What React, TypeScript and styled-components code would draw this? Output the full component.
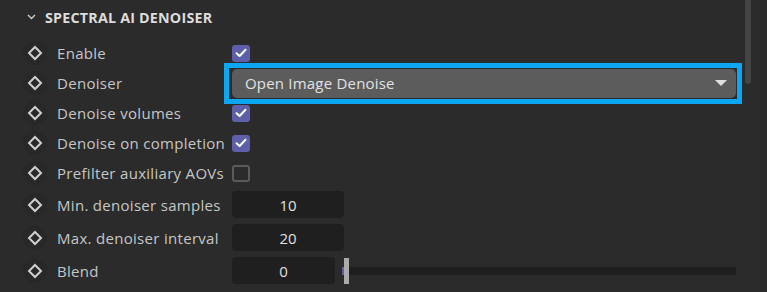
import styled, { createGlobalStyle } from "styled-components";

const GlobalStyle = createGlobalStyle`
  html, body {
    margin: 0;
    padding: 0;
    background: #2b2b2b;
    font-family: "Open Sans", "Noto Sans", sans-serif;
    overflow: hidden;
  }
`;

const Panel = styled.div`
  position: relative;
  width: 767px;
  height: 292px;
  background: #2b2b2b;
  color: #c9c9c9;
`;

const Scrollbar = styled.div`
  position: absolute;
  top: 0;
  left: 745px;
  width: 6px;
  height: 84px;
  background: #444;
  border-radius: 0 0 3px 3px;
`;

const Header = styled.div`
  display: flex;
  align-items: center;
  height: 34px;
  padding-left: 27px;
  gap: 9px;
`;

const Title = styled.h2`
  margin: 0;
  font-size: 14.3px;
  font-weight: 700;
  color: #dcdcdc;
  letter-spacing: 0.2px;
`;

const Rows = styled.div`
  display: flex;
  flex-direction: column;
  padding-top: 4px;
`;

const Row = styled.div<{ $tall?: boolean }>`
  display: grid;
  grid-template-columns: 24px 165px 1fr;
  column-gap: 10px;
  align-items: center;
  height: ${(p) => (p.$tall ? 33 : 30)}px;
  padding-left: 23px;
  padding-right: 31px;
`;

const KeyButton = styled.span`
  display: flex;
  align-items: center;
  justify-content: center;
  width: 24px;
  height: 24px;
  border-radius: 50%;
  background: #282828;
`;

const Label = styled.span`
  font-size: 15px;
  color: #c6c6c6;
  white-space: nowrap;
  letter-spacing: 0.3px;
`;

const Check = styled.span<{ $on?: boolean }>`
  display: flex;
  align-items: center;
  justify-content: center;
  box-sizing: border-box;
  width: 18px;
  height: 17px;
  border-radius: 3px;
  background: ${(p) => (p.$on ? "#5d5fa8" : "transparent")};
  border: ${(p) => (p.$on ? "none" : "2px solid #5b5b5b")};
`;

const DropWrap = styled.div`
  position: relative;
`;

const Dropdown = styled.div`
  display: flex;
  align-items: center;
  justify-content: space-between;
  height: 29px;
  padding: 0 9px 0 13px;
  background: #5c5c5c;
  border-radius: 5px;
  font-size: 15px;
  color: #e2e2e2;
  letter-spacing: 0.2px;
`;

const Highlight = styled.span`
  position: absolute;
  top: -6px;
  bottom: -6px;
  left: -8px;
  right: -6px;
  border: 5px solid #0ca6f2;
  pointer-events: none;
`;

const NumField = styled.div<{ $w: number }>`
  display: flex;
  align-items: center;
  justify-content: center;
  width: ${(p) => p.$w}px;
  height: 27px;
  background: #1f1f1f;
  border-radius: 4px;
  font-size: 15px;
  color: #e0e0e0;
`;

const SliderLine = styled.div`
  display: flex;
  align-items: center;
`;

const Track = styled.div`
  position: relative;
  flex: 1;
  height: 8px;
  margin-left: 14px;
  background: #1e1e1e;
`;

const Thumb = styled.span`
  position: absolute;
  left: -5px;
  top: -9px;
  width: 5px;
  height: 26px;
  background: #ababab;
  &::before {
    content: "";
    position: absolute;
    left: -2px;
    top: 9px;
    width: 2px;
    height: 8px;
    background: #5d5fa8;
  }
`;

function Diamond() {
  return (
    <KeyButton>
      <svg width="16" height="16" viewBox="0 0 16 16">
        <path d="M8 2 L14 8 L8 14 L2 8 Z" fill="none" stroke="#cfcfcf" strokeWidth="2" />
      </svg>
    </KeyButton>
  );
}

function CheckBox({ on }: { on?: boolean }) {
  return (
    <Check $on={on}>
      {on && (
        <svg width="12" height="10" viewBox="0 0 12 10">
          <path d="M1.5 5.2 L4.6 8 L10.5 1.8" fill="none" stroke="#fff" strokeWidth="2" strokeLinecap="round" strokeLinejoin="round" />
        </svg>
      )}
    </Check>
  );
}

export default function App() {
  return (
    <Panel>
      <GlobalStyle />
      <Scrollbar />
      <Header>
        <svg width="9" height="6" viewBox="0 0 9 6">
          <path d="M1 1 L4.5 4.5 L8 1" fill="none" stroke="#cfcfcf" strokeWidth="1.4" />
        </svg>
        <Title>SPECTRAL AI DENOISER</Title>
      </Header>
      <Rows>
        <Row>
          <Diamond />
          <Label>Enable</Label>
          <CheckBox on />
        </Row>
        <Row>
          <Diamond />
          <Label>Denoiser</Label>
          <DropWrap>
            <Dropdown>
              <span>Open Image Denoise</span>
              <svg width="12" height="6" viewBox="0 0 12 6">
                <path d="M0 0 L12 0 L6 6 Z" fill="#e0e0e0" />
              </svg>
            </Dropdown>
            <Highlight />
          </DropWrap>
        </Row>
        <Row>
          <Diamond />
          <Label>Denoise volumes</Label>
          <CheckBox on />
        </Row>
        <Row>
          <Diamond />
          <Label>Denoise on completion</Label>
          <CheckBox on />
        </Row>
        <Row>
          <Diamond />
          <Label>Prefilter auxiliary AOVs</Label>
          <CheckBox />
        </Row>
        <Row $tall>
          <Diamond />
          <Label>Min. denoiser samples</Label>
          <NumField $w={112}>10</NumField>
        </Row>
        <Row $tall>
          <Diamond />
          <Label>Max. denoiser interval</Label>
          <NumField $w={112}>20</NumField>
        </Row>
        <Row $tall>
          <Diamond />
          <Label>Blend</Label>
          <SliderLine>
            <NumField $w={103}>0</NumField>
            <Track>
              <Thumb />
            </Track>
          </SliderLine>
        </Row>
      </Rows>
    </Panel>
  );
}
